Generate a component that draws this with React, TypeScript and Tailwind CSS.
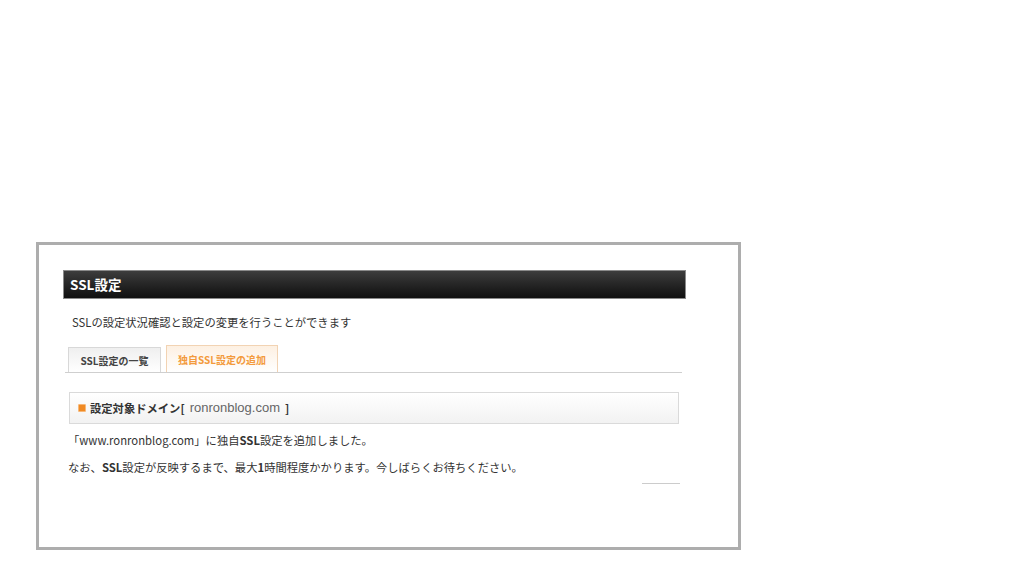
const jp = "font-['Noto_Sans_CJK_JP','Liberation_Sans',sans-serif]";

const Tab = ({ label, active }: { label: string; active?: boolean }) => (
    <div
        className={
            active
                ? "h-[27px] w-[112px] flex items-center justify-center border border-b-0 border-[#f2d3b3] bg-gradient-to-b from-[#fdf0e2] to-white text-[10px] font-bold text-[#f39a3c]"
                : "h-[25px] w-[93px] flex items-center justify-center border border-b-0 border-[#d8d8d8] bg-gradient-to-b from-[#efefef] to-white text-[10px] font-bold text-[#444]"
        }
    >
        {label}
    </div>
);

export default function App() {
    return (
        <div className={`h-[576px] w-[1024px] bg-white overflow-hidden ${jp}`}>
            <div className="ml-[36px] mt-[242px] w-[705px] h-[308px] border-[3px] border-[#adadad] bg-white">
                <div className="pl-[24px] pt-[25px]">
                    <div className="h-[29px] w-[623px] flex items-center pl-[6px] border border-[#8a8a8a] bg-gradient-to-b from-[#3d3d3d] to-[#101010]">
                        <span className="text-[13.5px] font-bold text-white leading-none">SSL設定</span>
                    </div>

                    <p className="mt-[15px] pl-[9px] text-[11.3px] leading-[16px] text-[#333]">
                        SSLの設定状況確認と設定の変更を行うことができます
                    </p>

                    <div className="mt-[15px] ml-[2px] w-[617px] flex items-end gap-[5px] pl-[3px] border-b border-[#cfcfcf]">
                        <Tab label="SSL設定の一覧" />
                        <Tab label="独自SSL設定の追加" active />
                    </div>

                    <div className="mt-[19px] ml-[6px] w-[610px] h-[32px] flex items-center pl-[8px] border border-[#dadada] bg-gradient-to-b from-white to-[#f2f2f2]">
                        <span className="w-[8px] h-[8px] rounded-[1px] bg-[#f08a24] border border-[#f7b878] mr-[4px]" />
                        <span className="text-[11.3px] font-bold text-[#333]">設定対象ドメイン[</span>
                        <span className="text-[13px] text-[#666] px-[5px] font-['Liberation_Sans',sans-serif]">ronronblog.com</span>
                        <span className="text-[11.3px] font-bold text-[#333]">]</span>
                    </div>

                    <p className="mt-[8px] pl-[5px] text-[11.3px] leading-[16px] text-[#333]">
                        「www.ronronblog.com」に独自<b>SSL</b>設定を追加しました。
                    </p>
                    <p className="mt-[11px] pl-[5px] text-[11.3px] leading-[16px] text-[#333]">
                        なお、<b>SSL</b>設定が反映するまで、最大<b>1</b>時間程度かかります。今しばらくお待ちください。
                    </p>

                    <div className="mt-[8px] ml-[579px] w-[38px] h-px bg-[#cccccc]" />
                </div>
            </div>
        </div>
    );
}
